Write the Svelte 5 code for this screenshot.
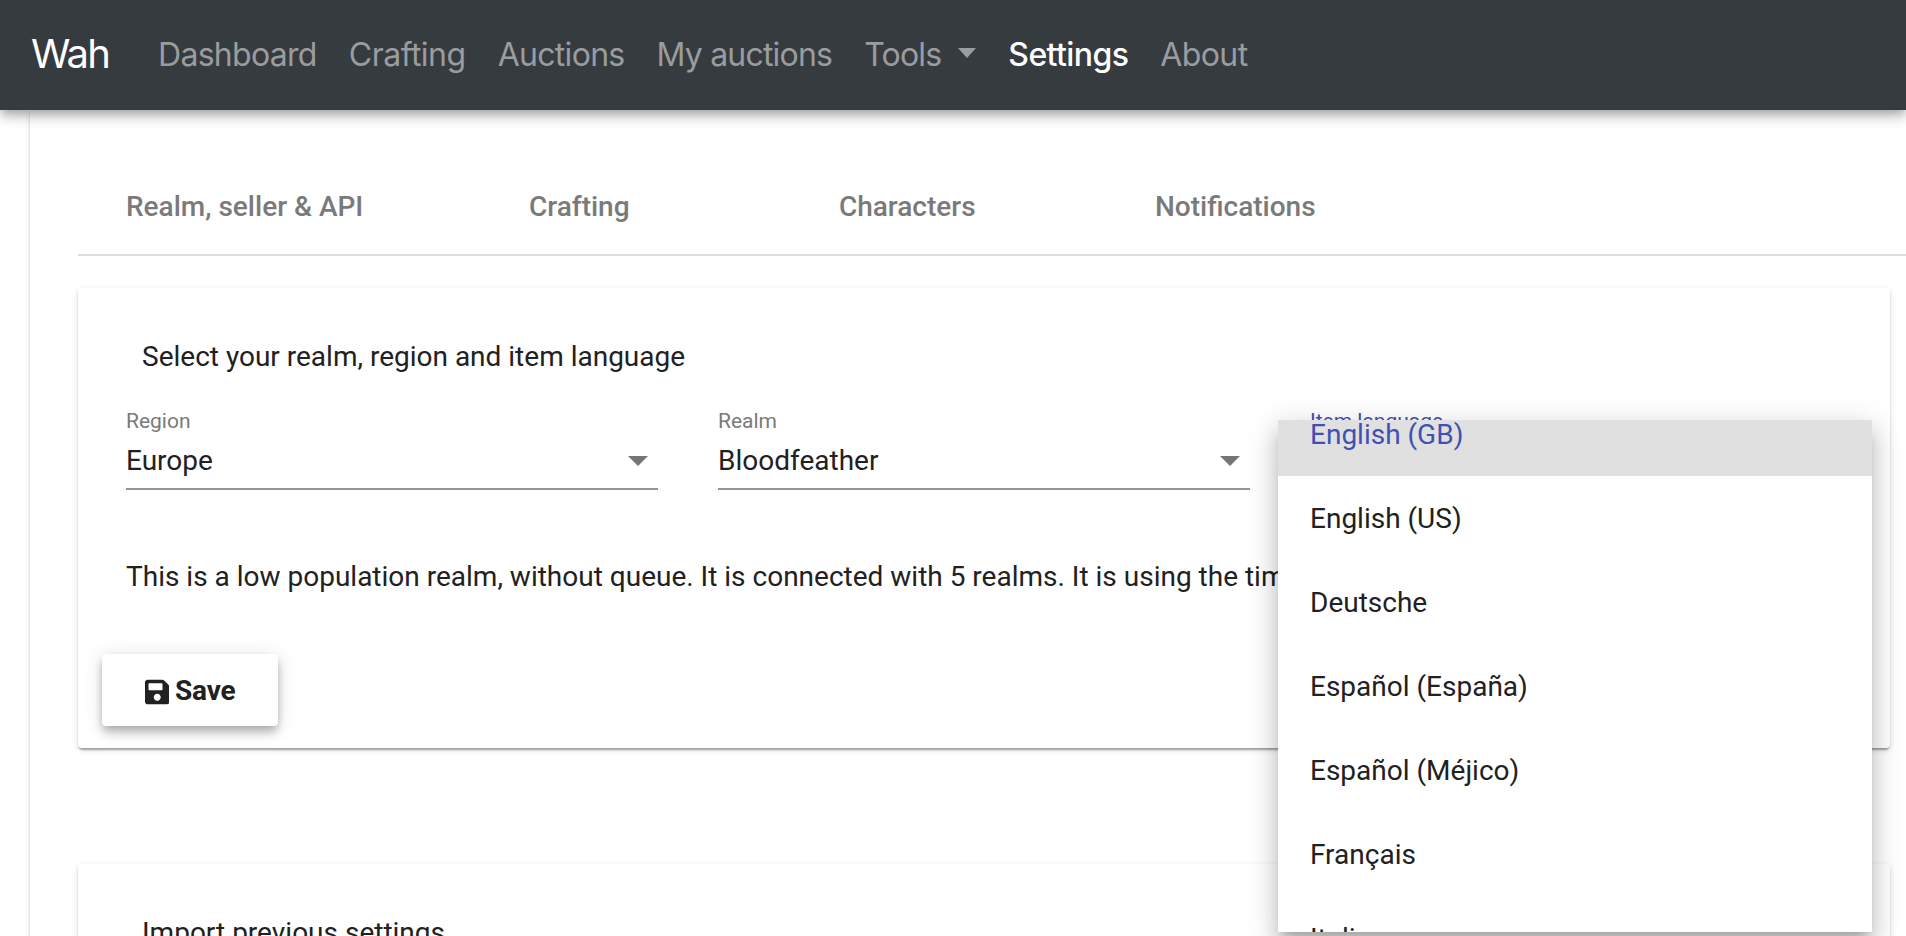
<script>
  const links = [
    { label: 'Dashboard', spacing: -0.7 },
    { label: 'Crafting', spacing: -0.5 },
    { label: 'Auctions', spacing: -0.7 },
    { label: 'My auctions', spacing: -0.8 },
    { label: 'Tools', menu: true, spacing: -0.8 },
    { label: 'Settings', active: true, spacing: -0.6 },
    { label: 'About', spacing: -0.6 }
  ];
  const tabs = ['Realm, seller & API', 'Crafting', 'Characters', 'Notifications'];
  const fields = [
    { label: 'Region', value: 'Europe' },
    { label: 'Realm', value: 'Bloodfeather' },
    { label: 'Item language', value: '', open: true }
  ];
  const languages = [
    'English (GB)',
    'English (US)',
    'Deutsche',
    'Español (España)',
    'Español (Méjico)',
    'Français',
    'Italiano'
  ];
  let selected = $state('English (GB)');
</script>

<div class="app">
  <header class="navbar">
    <span class="brand">Wah</span>
    <nav class="links">
      {#each links as link}
        <span class="link" class:active={link.active} style:letter-spacing="{link.spacing}px">
          <span>{link.label}</span>
          {#if link.menu}<i class="caret"></i>{/if}
        </span>
      {/each}
    </nav>
  </header>

  <main class="page">
    <div class="tabs">
      {#each tabs as tab}
        <div class="tab">{tab}</div>
      {/each}
    </div>

    <section class="card realm-card">
      <h2>Select your realm, region and item language</h2>
      <div class="fields">
        {#each fields as field}
          <div class="field" class:open={field.open}>
            <span class="label">{field.label}</span>
            <div class="value">
              <span>{field.value}</span>
              <i class="arrow"></i>
            </div>
            {#if field.open}
              <div class="panel">
                <div class="options">
                  {#each languages as language}
                    <button
                      class="option"
                      class:selected={language === selected}
                      onclick={() => (selected = language)}>{language}</button>
                  {/each}
                </div>
              </div>
            {/if}
          </div>
        {/each}
      </div>
      <p class="info">This is a low population realm, without queue. It is connected with 5 realms. It is using the timezone</p>
      <button class="save">
        <svg viewBox="0 0 448 512" aria-hidden="true">
          <path d="M433.941 129.941l-83.882-83.882A48 48 0 0 0 316.118 32H48C21.49 32 0 53.49 0 80v352c0 26.51 21.49 48 48 48h352c26.51 0 48-21.49 48-48V163.882a48 48 0 0 0-14.059-33.941zM224 416c-35.346 0-64-28.654-64-64 0-35.346 28.654-64 64-64s64 28.654 64 64c0 35.346-28.654 64-64 64zm96-304.52V212c0 6.627-5.373 12-12 12H76c-6.627 0-12-5.373-12-12V108c0-6.627 5.373-12 12-12h228.52c3.183 0 6.235 1.264 8.485 3.515l3.48 3.48A11.996 11.996 0 0 1 320 111.48z" />
        </svg>
        <span>Save</span>
      </button>
    </section>

    <section class="card import-card">
      <h2>Import previous settings</h2>
    </section>
  </main>
</div>

<style>
  :global(body) {
    margin: 0;
    background: #fff;
  }
  .app {
    height: 936px;
    overflow: hidden;
    display: flex;
    flex-direction: column;
    font-family: Roboto, sans-serif;
    font-size: 28px;
    line-height: 32px;
    color: #212121;
  }
  .navbar {
    position: relative;
    z-index: 2;
    flex: none;
    box-sizing: border-box;
    height: 110px;
    padding: 0 32px 0 31px;
    display: flex;
    align-items: center;
    background: #363b3f;
    box-shadow:
      0 4px 8px -2px rgba(0, 0, 0, 0.2),
      0 8px 10px 0 rgba(0, 0, 0, 0.14),
      0 2px 20px 0 rgba(0, 0, 0, 0.12);
    font-family: Inter, sans-serif;
    white-space: nowrap;
  }
  .brand {
    width: 127px;
    margin-bottom: 2px;
    font-size: 40px;
    line-height: 60px;
    letter-spacing: -1.8px;
    color: #fff;
  }
  .links {
    display: flex;
    gap: 32px;
    font-size: 32px;
    line-height: 48px;
  }
  .link {
    display: flex;
    align-items: center;
    color: #9a9c9f;
  }
  .link.active {
    font-weight: 500;
    color: #fff;
  }
  .caret {
    margin: 0 0 4px 17px;
    border: 9px solid transparent;
    border-top: 10px solid currentColor;
    border-bottom: 0;
  }
  .page {
    flex: none;
    box-sizing: border-box;
    width: 1908px;
    height: 900px;
    margin-left: 30px;
    padding: 48px 0 0 48px;
    background: #fff;
    box-shadow:
      0 4px 2px -2px rgba(0, 0, 0, 0.2),
      0 2px 2px 0 rgba(0, 0, 0, 0.14),
      0 2px 6px 0 rgba(0, 0, 0, 0.12);
  }
  .tabs {
    display: flex;
    gap: 8px;
    height: 96px;
    border-bottom: 2px solid #dedede;
  }
  .tab {
    box-sizing: border-box;
    min-width: 320px;
    padding: 0 48px;
    line-height: 98px;
    text-align: center;
    font-weight: 500;
    color: #7a7a7a;
    white-space: nowrap;
  }
  .card {
    box-sizing: border-box;
    width: 1812px;
    padding: 48px;
    border-radius: 4px;
    background: #fff;
    box-shadow:
      0 4px 2px -2px rgba(0, 0, 0, 0.2),
      0 2px 2px 0 rgba(0, 0, 0, 0.14),
      0 2px 6px 0 rgba(0, 0, 0, 0.12);
  }
  .realm-card {
    height: 460px;
    margin-top: 32px;
  }
  .import-card {
    height: 240px;
    margin-top: 116px;
  }
  h2 {
    margin: 0;
    padding: 5px 16px 3px;
    font-size: 28px;
    font-weight: 400;
    line-height: 32px;
  }
  .fields {
    display: grid;
    grid-template-columns: repeat(3, 532px);
    gap: 60px;
    margin-top: 29px;
  }
  .field {
    position: relative;
    display: flex;
    flex-direction: column;
  }
  .label {
    height: 39px;
    line-height: 32px;
    font-size: 21px;
    color: #7a7a7a;
  }
  .open .label {
    color: #3f51b5;
  }
  .value {
    display: flex;
    align-items: center;
    justify-content: space-between;
    box-sizing: border-box;
    height: 46px;
    padding: 0 10px 11px 0;
    border-bottom: 2px solid #949494;
  }
  .arrow {
    border: 10px solid transparent;
    border-top-color: #757575;
    border-bottom: 0;
  }
  .panel {
    position: absolute;
    z-index: 1;
    left: -32px;
    top: 15px;
    width: 594px;
    height: 512px;
    overflow: hidden;
    background: #fff;
    box-shadow:
      0 10px 10px -6px rgba(0, 0, 0, 0.2),
      0 16px 20px 2px rgba(0, 0, 0, 0.14),
      0 6px 28px 4px rgba(0, 0, 0, 0.12);
  }
  .options {
    margin-top: -28px;
    display: flex;
    flex-direction: column;
  }
  .option {
    flex: none;
    height: 84px;
    padding: 2px 32px 0;
    border: 0;
    background: none;
    font: inherit;
    color: inherit;
    text-align: left;
  }
  .option.selected {
    background: #e0e0e0;
    color: #3f51b5;
  }
  .info {
    margin: 71px 0 0;
    white-space: nowrap;
    overflow: hidden;
    width: 1250px;
  }
  .save {
    display: flex;
    align-items: center;
    justify-content: center;
    gap: 6px;
    width: 176px;
    height: 72px;
    margin: 61px 0 0 -24px;
    padding: 0;
    border: 0;
    border-radius: 4px;
    background: #fff;
    color: inherit;
    font: 700 28px/32px Roboto, sans-serif;
    letter-spacing: -0.2px;
    box-shadow:
      0 4px 8px -2px rgba(0, 0, 0, 0.2),
      0 8px 10px 0 rgba(0, 0, 0, 0.14),
      0 2px 20px 0 rgba(0, 0, 0, 0.12);
  }
  .save span {
    padding-top: 1px;
  }
  .save svg {
    width: 24.5px;
    height: 28px;
    margin-top: 3px;
    fill: currentColor;
  }
</style>
